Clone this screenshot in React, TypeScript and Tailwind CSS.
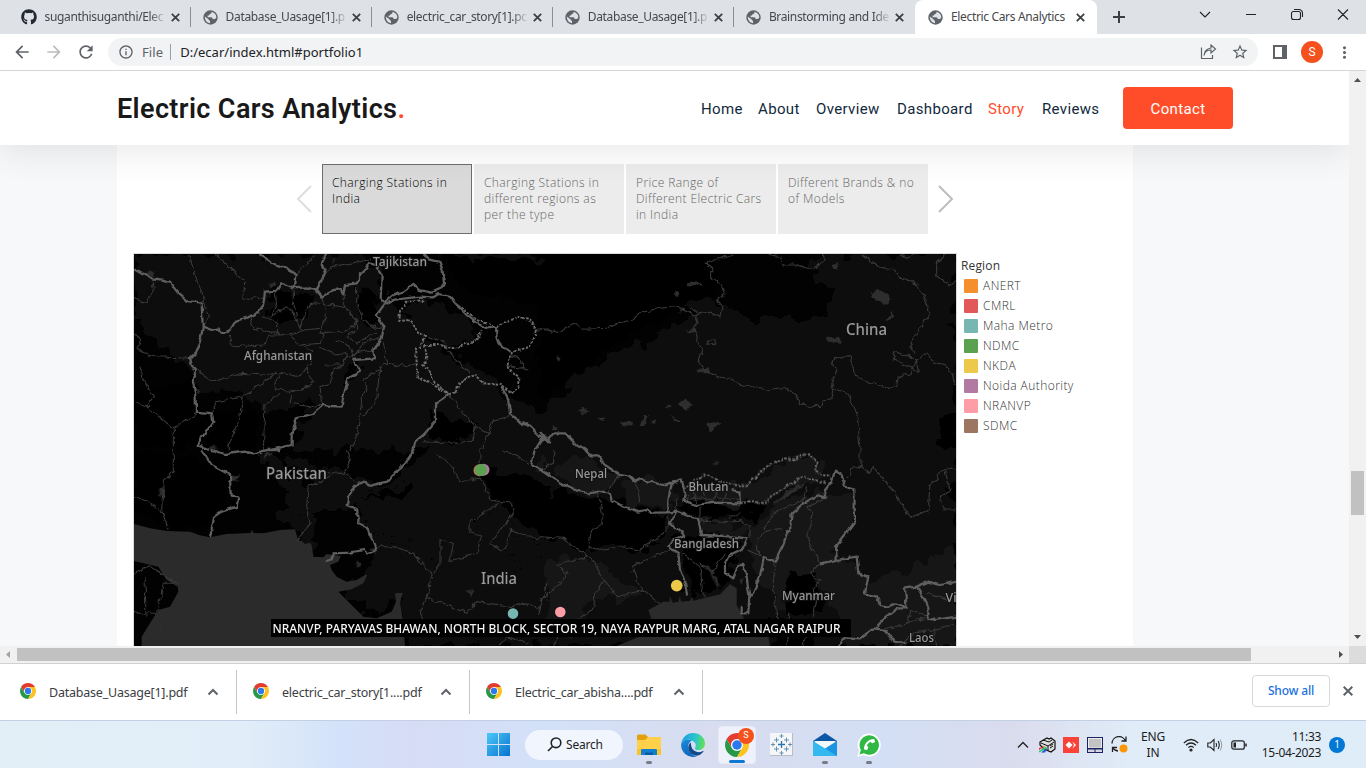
import React from "react";
import {
  MdArrowBack, MdArrowForward, MdRefresh, MdInfoOutline, MdStarBorder, MdMoreVert,
} from "react-icons/md";
import { FaGithub, FaPhoneAlt } from "react-icons/fa";

const tabs = [
  "suganthisuganthi/Elec",
  "Database_Uasage[1].p",
  "electric_car_story[1].pc",
  "Database_Uasage[1].p",
  "Brainstorming and Ide",
];

const ui = "font-['Noto_Sans','Open_Sans',sans-serif]";

function Globe() {
  return (
    <svg className="shrink-0" width="15" height="15" viewBox="0 0 15 15">
      <circle cx="7.500" cy="7.500" r="7.200" fill="#5f6368" />
      <path d="M8.600 1.800Q8.800 3.600 7.300 4 5.800 4.200 6 5.600H4.600V7.200H8.400Q9.600 7.500 9.600 9H11.500Q13 9 13.300 7.600 13.400 3.300 8.600 1.800z" fill="#dee1e6" />
      <path d="M1.700 6.600L5.500 9.200Q5.600 10.600 7 10.700V13.200Q2 12.600 1.700 6.600z" fill="#dee1e6" />
    </svg>
  );
}

function Cross({ className }: { className: string }) {
  return (
    <svg className={`shrink-0 ${className}`} width="9" height="9" fill="none" stroke="#3c4043" strokeWidth="1.8"><path d="M.8.800l7.400 7.400m0-7.400L.8 8.200" /></svg>
  );
}

function Tabs() {
  return (
    <div className="flex h-[34px] shrink-0 bg-[#dee1e6] pl-[9.500px] text-[#45494d]">
      {tabs.map((t, i) => (
        <div key={i} className="relative flex w-[181.100px] shrink-0 items-center pl-[12px]">
          <span className="flex w-[23px] shrink-0">
            {i === 0 ? <FaGithub size={16} className="-ml-[1px] text-[#24292f]" /> : <Globe />}
          </span>
          <span className="w-[122px] overflow-hidden whitespace-nowrap text-[12px] tracking-[-0.34px] [mask-image:linear-gradient(to_right,#000_86%,transparent)]">{t}</span>
          <Cross className="ml-[4px]" />
          {i < 4 && <span className="ml-auto h-[20px] w-px bg-[#8a8d91]" />}
        </div>
      ))}
      <div className="relative flex w-[182px] shrink-0 items-center rounded-t-[8px] bg-white pl-[13px]">
        <Globe />
        <span className="ml-[8px] w-[118px] whitespace-nowrap text-[12px] tracking-[-0.34px]">Electric Cars Analytics</span>
        <Cross className="ml-[7px]" />
      </div>
      <div className="flex w-[44px] items-center justify-center">
        <svg width="12" height="12" stroke="#3c4043" strokeWidth="2"><path d="M6 0v12M0 6h12" /></svg>
      </div>
      <svg className="ml-[53px] mt-[6px]" width="160" height="18" fill="none" stroke="#222" strokeWidth="1.100">
        <path d="M6 6l5 5 5-5M52 8.500h10M99.500 5.500h5q2 0 2 2v4q0 2-2 2h-5q-2 0-2-2v-4q0-2 2-2zM100 3.500h4.500q4 0 4 4v3.500M144 3.500l10 10m0-10l-10 10" />
      </svg>
    </div>
  );
}

function Toolbar() {
  return (
    <div className="flex h-[37px] shrink-0 items-center border-b border-[#d5d6d8] bg-white text-[#5f6368]">
      <MdArrowBack size={20} className="ml-[12px]" />
      <MdArrowForward size={20} className="ml-[12px] text-[#babcbe]" />
      <MdRefresh size={20} className="ml-[12px]" />
      <div className="ml-[12px] flex h-[28px] w-[1150px] items-center rounded-full bg-[#f1f3f4] pl-[10px] pr-[9px] text-[13px]">
        <MdInfoOutline size={16} />
        <span className="ml-[8px] pt-px tracking-[0.1px]">File</span>
        <span className="ml-[7px] h-[16px] w-px bg-[#9aa0a6]" />
        <span className="ml-[9px] pt-px tracking-[0.01px] text-[#202124]">D:/ecar/index.html#portfolio1</span>
        <svg className="ml-auto" width="17" height="16" fill="none" stroke="#5f6368" strokeWidth="1.200">
          <path d="M1.500 3.500v11h11V11M4 11.500q1-5.500 7-5.500V9l4.500-4L11 1v3Q4.500 5 4 11.500z" />
        </svg>
        <MdStarBorder size={18} className="ml-[14px]" />
      </div>
      <svg className="ml-[15px]" width="14" height="14"><path d="M1 1h12v12H1z" fill="none" stroke="#5f6368" strokeWidth="2" /><path d="M9 0h5v14H9z" fill="#5f6368" /></svg>
      <span className="ml-[14px] flex size-[22px] items-center justify-center rounded-full bg-[#f4511e] font-['Roboto',sans-serif] text-[12px] text-white">S</span>
      <MdMoreVert size={19} className="ml-[12px]" />
    </div>
  );
}

function Header() {
  const nav = ["Home", "About", "Overview", "Dashboard", "Story", "Reviews"];
  const widths = ["w-[41px]", "w-[42px]", "w-[65px]", "w-[75px]", "w-[38px]", "w-[57px]"];
  return (
    <div className="relative z-10 flex h-[74px] shrink-0 items-center bg-white pl-[117px] font-['Roboto',sans-serif] shadow-[0_10px_30px_rgba(70,70,70,0.1)]">
      <div className="w-[584px] pt-[2px] text-[27px] font-semibold tracking-[0.380px] text-[#191919]">Electric Cars Analytics<span className="text-[#ff4d29]">.</span></div>
      <div className="flex gap-[16px] pt-[2px] text-[15px] tracking-[0.350px]">
        {nav.map((n, i) => (
          <span key={n} className={`${widths[i]} whitespace-nowrap ${n === "Story" ? "text-[#ff4d29]" : "text-[#12293c]"}`}>{n}</span>
        ))}
      </div>
      <div className="ml-[24px] flex h-[42px] w-[110px] items-center justify-center rounded-[4px] bg-[#ff4d29] pt-[2px] text-[15px] tracking-[0.350px] text-white">Contact</div>
    </div>
  );
}

const points = [
  ["Charging Stations in", "India"],
  ["Charging Stations in", "different regions as", "per the type"],
  ["Price Range of", "Different Electric Cars", "in India"],
  ["Different Brands & no", "of Models"],
];

const legend = [
  ["ANERT", "bg-[#f58e2c]"], ["CMRL", "bg-[#e1575a]"], ["Maha Metro", "bg-[#77b7b2]"], ["NDMC", "bg-[#5aa150]"],
  ["NKDA", "bg-[#edc949]"], ["Noida Authority", "bg-[#b07aa2]"], ["NRANVP", "bg-[#ff9da7]"], ["SDMC", "bg-[#9c7660]"],
];

const labels: [string, number, number, number, number][] = [
  ["Tajikistan", 373, 266, 54, 12], ["Afghanistan", 244, 360, 68, 12], ["Pakistan", 266, 478.500, 61, 16],
  ["India", 481, 583.500, 36, 16], ["Nepal", 575, 478, 32, 12], ["Bhutan", 688.500, 491, 40, 12],
  ["Bangladesh", 674, 548, 65, 12], ["Myanmar", 782, 600, 53, 12], ["Laos", 909, 642, 25, 12],
  ["Vi", 945.500, 602, 11, 12], ["China", 846, 335, 41, 16],
];

const pos = ["translate(130 250) scale(.33333)", "translate(130 450) scale(.33333)", "translate(540 250) scale(.33333)", "translate(540 450) scale(.33333)"];

const terrain = [
  "M12 12H690L760 60 750 150 800 170 880 260 880 300 800 340 650 340 640 470 560 460 430 480 330 430 200 420 190 360 100 300 12 200zM750 200L880 200 900 280 1040 370 1260 520V600H500V520L660 400zM870 10L1000 20 1100 60 1260 90V12z",
  "M380 0L640 60 760 110 900 0H1260V588H830L810 430 740 500 630 420 700 370 740 290 680 180 550 190 560 320 510 250 440 220 470 130z",
  "M830 12H1248V600H0V500L100 380 200 320 330 270 460 190 400 160 500 145 640 215 800 205 900 180 940 140 820 90z",
  "M0 0H1248V588H0z",
];
const terrainFill = ["#0a0a0a", "#070707", "#0a0a0a", "#090909"];
const raised = [
  "M90 70L200 30 330 90 400 130 390 180 320 210 220 240 120 200 60 230zM225 260L300 250 370 220 440 130 550 150 680 110 740 200 710 280 630 370 510 350 440 440 300 380 220 370zM820 180L900 150 980 190 1040 230 1040 270 960 295 880 250zM890 290L990 330 1110 410 1150 510 1250 580 1200 600 1060 560 1000 460 900 370zM560 520L690 460 740 360 800 340 730 470 680 600H600z",
  "M480 100L540 90 530 210 490 190zM700 140L860 80 930 160 850 280 730 240zM1040 200L1150 170 1120 250 1250 300 1180 330 1060 290zM1100 400L1260 300V588H1020L980 500zM800 290L960 350 900 440 850 480z",
  "M1240 400L1130 440 1110 550 1000 600H1140L1180 520 1248 460zM870 70L1010 55 1080 180 1150 250 1070 280 920 230 870 210zM660 550L740 530 860 570 770 600z",
  "M0 0L40 40 0 70zM30 60L120 10 230 80 200 130 100 110zM240 80L410 110 385 185 250 160zM430 120L590 100 600 160 440 160zM600 110L810 10 870 80 720 120 680 155 600 150zM490 210L640 230 610 260 490 250zM630 240L720 150 850 120 940 140 940 230 880 310 1000 400 1248 290V588H920L830 370 740 480 640 370zM20 330L180 330 300 440 150 450 110 560 20 500z",
];
const raisedFill = ["#101010", "#0b0b0b", "#0c0c0c", "#141414"];
const shade = [
  "M420 125L550 130 540 200 420 210zM680 110L750 130 740 220 700 230zM940 20L1260 30V170L1000 120zM900 480L1040 510 1000 580 900 570zM10 440L190 380 220 590H12zM250 480L380 460 380 600H240z",
  "M12 0L250 30 300 120 220 240 60 220 12 150zM710 140L800 120 850 90 830 150zM440 20L560 90 540 110 470 60zM1050 60L1250 100V260L1150 210z",
  "M1248 480L1200 510 1180 590 1248 600zM0 12L500 12 550 130 400 180 200 300 0 450z",
  "M400 155L670 165 650 210 590 190 480 220zM390 245L600 270 560 390 450 440 430 340zM740 380L830 370 850 480 740 500zM0 130L180 140 380 200 340 300 140 290 0 250zM690 500L830 530 820 588H700zM1220 120L1248 120V190z",
];
const seas: [number, string][] = [
  [1, "M12 222L60 235 110 243 180 245 210 256 240 262 290 252 362 249 365 240 372 249 400 250 450 240 495 238 505 272 515 272 525 282 540 278 545 285 550 320 580 322 590 312 632 318 625 335 600 345 605 360 620 380 650 395 680 390 705 375 712 375 700 400 665 418 625 425 700 500 740 505 785 485 798 455 795 430 818 428 810 460 820 520 825 588H35V560L60 520 85 480 120 470 145 425 143 410 110 390 85 350 12 333z"],
  [3, "M325 480L370 455 388 455 390 438 398 458 415 455 418 438 424 455 450 452 455 440 460 452 490 445 540 433 570 402 590 415 590 465 610 500V545L685 560 690 588H230L310 555 335 510z"],
];
const lakes: [number, string][] = [
  [2, "M440 98L465 94 488 106 445 106zM400 132L412 122 418 132 405 140zM875 45L890 42 897 53 880 57zM992 138L1005 122 1030 122 1052 148 1048 165 1025 160zM1035 213L1055 186 1060 200zM858 268L880 264 900 260 902 278 865 275zM436 242L460 236 465 250zM113 480L130 474 147 488 125 488zM172 505L195 502 188 514zM246 512L276 514 274 530 250 525zM302 528L312 495 324 495 310 528zM330 517L348 508 345 522zM374 472L395 465 390 475zM413 463L435 445 458 465 440 480zM388 497L415 510 414 520zM502 520L545 516 510 545zM465 360L510 352 515 370 485 370zM38 528L55 534 40 540zM448 170L470 180 470 192zM48 322L62 325 56 335z"],
  [0, "M415 102L432 98 438 112 420 110zM608 28L620 34 610 40zM50 65L75 65 75 82 55 82zM235 585L270 592 240 598zM198 415L210 425 200 435z"],
  [1, "M300 75L332 72 320 85 330 94 305 92zM88 118L105 116 100 138 90 135zM1010 425L1035 420 1022 440zM400 10L430 4 405 28zM85 530L100 515 98 528 85 542zM720 298L740 292 735 310zM675 333L695 348 680 352z"],
  [3, "M695 165L740 125 800 95 790 105 735 145zM510 25L540 38 515 45 528 35zM550 195L575 200 605 185 600 192 575 205zM495 350L525 365 520 375 540 405 535 410 520 388zM598 390L610 385 605 410zM485 215L515 196 495 215z"],
];
const major: [number, string][] = [
  [0, "M12 58L38 73 70 88 95 92 120 98 145 130 175 157 215 160 218 230 212 270 195 310 180 325 188 355 200 362 188 390 197 440 198 485 245 490 250 515 225 550 200 585 240 600M218 230L245 240 265 235 280 250 300 240 318 212 355 202 385 185 400 165 405 125 440 122 452 100 490 115 530 112 560 122 575 140 610 120 630 118 640 130 645 105 680 100 690 85 690 70 720 40 745 48M388 12L430 40 470 55 500 72 495 112M590 12L575 40 585 70 565 110 560 122M880 12L895 28 928 35 938 60 942 100 935 115 905 128 870 120 850 105 820 125 790 135 765 155 752 150 755 75 740 55 745 48M765 160L790 150 870 140 910 142 925 132 960 140 985 170 1010 195 1040 220 1070 235 1098 232L1100 265 1115 290 1145 305M765 160L740 195 762 230 755 265 730 300 735 325 670 330 690 365 655 385 640 440 635 470 605 468 580 465 550 490 500 505 485 550 485 585 420 600M955 435L915 465 915 515 880 555 855 575 850 600M1115 410L1135 450 1140 490 1170 515 1200 530 1225 555 1260 575M1240 560L1215 600"],
  [1, "M850 0L830 35 800 60 775 95 745 100 715 110 705 92 690 97 655 140 650 165 685 180 685 220 710 232 735 290 740 300 715 313 700 300 660 308 612 310 605 328 583 333M215 0L245 45 300 75 302 140 325 142 320 170 275 185 252 200 240 262M245 0L285 12 345 5 370 10 410 0 450 0M1215 0L1203 45 1230 58 1260 72"],
  [2, "M0 545L22 573 40 550 75 550 110 585 140 600M0 575L20 565"],
  [3, "M135 0L155 20 180 18 195 45 240 75 270 80 285 95 300 88 340 98 370 105 395 98M0 55L45 88 100 118 145 130 175 125 210 132 215 150 250 170 290 185 320 180 340 188 385 187 385 150 395 100 425 88 435 130 430 150 470 165 520 158 600 160 598 125 575 120M860 145L855 120 875 95 885 62 905 75 915 110 943 118 945 215 915 255 888 290 890 330 950 320 955 370 985 380 975 430 1010 440 1020 465 1045 470 1070 460 1100 475 1095 415 1130 410 1165 395 1200 405 1248 395M860 145L830 138 790 160 755 190 750 240 740 250 730 285 705 335 672 322 660 380 635 435 628 435 625 490 605 490 605 470M385 187L410 185 450 200 475 205 483 255 560 258 620 265 605 300 565 320 555 340 555 370 580 385 595 345 610 345 620 380 628 440M410 185L390 220 410 235 435 255 395 270 385 290 415 310 420 360 435 400 442 435M895 588L915 562 960 565 1000 535 1035 540 1060 575 1100 580M1130 410L1150 440 1165 470 1165 505 1185 510 1248 500M1100 475L1075 475 1040 500 1010 530M890 330L840 340"],
];
const dotted: [number, string][] = [
  [0, "M880 150L830 155 810 185 808 210 840 215 855 235 885 260 870 290 858 295 862 380 900 400 955 435M885 285L930 285 975 295 1040 270 1055 240M885 285L890 320 880 345 900 370 915 400 955 430M955 435L975 430 990 395 1035 375 1060 400 1115 405M1098 232L1140 210 1170 200 1205 215 1218 240 1200 290 1150 305 1130 350 1165 380 1165 410 1145 430 1115 410M985 165L1040 210 1098 230"],
  [3, "M435 120L460 90 500 75 520 85 580 105 620 105 650 80 670 55 730 25 760 28 805 10 830 35 825 65 850 75 870 82M600 158L680 155 720 122 790 80 860 100"],
];
const minor: [number, string][] = [
  [0, "M178 12L190 60 205 100 220 140 235 205 220 230M258 12L345 95 338 145 400 145M12 145L50 160 70 120 65 80M435 122L440 160 425 200 470 170 490 190 510 235 520 200 540 160 640 170 680 210 660 240 570 250 590 200 575 140M490 115L490 160 500 200M440 210L440 250 370 235 360 200 390 190M435 250L480 255 520 240 570 235M400 200L440 215M295 255L310 290 400 285 420 255 480 255 510 285 570 280 580 250M510 285L545 300 540 340 510 380 450 370 430 400 440 420 500 425 550 400 530 350M640 130L640 170 680 210 680 240 650 260 680 280 740 250M680 100L680 160 700 210 740 235 760 230M590 70L600 50 720 30M550 20L500 75M570 290L620 315 650 310 640 345 610 360 600 400 570 410 575 465 540 470 480 460 485 430M620 270L660 290 670 320 700 280 750 260M640 330L690 305 730 300M640 345L580 345M200 360L250 395 335 370 400 375 440 370M245 490L260 455 340 440 430 375M340 440L325 520 295 580 295 600M400 600L405 460 450 430M12 255L35 270 20 300 80 320 185 325M30 350L40 390 70 440 50 470 130 535 130 600M130 535L200 490M12 455L60 470M760 280L770 340 700 390 710 410 695 450 690 500 680 560 660 600M770 340L830 350 858 340M960 435L990 480 1035 530 1075 550 1090 510 1140 500M1075 550L1050 600M1035 530L1030 570 980 580 880 575M885 260L940 275 970 320 1020 370M1220 240H1260M1145 320L1175 330 1180 360M1130 345L1195 360M750 350L740 450 700 500"],
  [1, "M130 0L130 65 100 90 95 180 115 240M12 135L60 160 100 190M650 0L660 40 640 70 590 68M640 70L680 100M600 80L535 110 530 170 540 220 505 270M915 10L960 40 990 95 1020 90 1050 85 1065 110 1080 150 1145 160 1150 190 1110 240 1080 280 1110 300 1130 290 1140 240 1190 260 1260 265M1105 160L1020 215 1020 245 1055 255 1040 310 960 335 970 280 930 270 930 340 905 380 890 445 940 460 1010 490 1040 455 1150 470 1180 460 1230 470M740 290L790 290 850 310 905 375M890 440L870 480 880 520M1050 0V40M1250 400L1225 500M1110 588L1130 560 1190 580M12 370L60 350 140 400 100 400 80 490 12 490M45 380L48 500M1120 0L1200 40"],
  [2, "M0 240L50 248 100 220 130 238 200 235 250 215 280 210 295 190 360 175 410 170 460 195 490 185 545 198 545 170 530 150 555 130 545 105 515 85 515 50 497 40 580 12M465 195L475 220 460 235 485 300 475 330 495 360 530 380 570 385 600 402 680 420 735 412 775 440 775 460 800 468 845 470 850 452 872 450 880 415 875 400 890 360 875 340 890 320 930 322 945 375 985 400 1005 400 1045 415 1070 410 1075 380 1110 370 1130 330 1100 315 1060 305 1060 330 1105 350 1135 370 1130 330 1165 310 1180 340 1230 350 1245 405M880 415L920 430 950 490 955 530 960 600M685 12L720 20 730 45 770 45 820 60 855 30 850 12M965 12L1015 50 1060 60 1080 85 1115 90 1150 130 1170 190 1135 240 1110 280 1125 310M1080 12L1100 25 1120 12M1220 12L1190 40 1190 75 1230 107 1248 95M505 270L525 270 525 284 505 282z"],
  [3, "M175 130L185 180 190 220 155 240 145 290 160 300 250 290 300 300 380 240 385 200M0 260L70 265 115 300 150 320 190 390 160 440 165 470 130 500M150 320L80 335 50 345 80 370 50 410 0 450M385 300L275 350 290 390 310 420 360 460M190 390L230 440 310 420M290 100L300 160M240 75L200 125M45 0L40 40 0 60M430 310L480 350 490 445M480 340L520 360 555 310M410 185V145M480 210L560 215 600 210 630 230 630 260M480 170L480 250M450 130L440 160M460 125L470 160M490 125L500 155M530 125L520 155M560 130L550 155M440 145H600M800 170L860 145M800 170L820 190 800 260 830 320 840 340 810 370 840 390 820 420 830 450 820 500M705 335L700 400 710 500 750 530 740 588M670 320L650 300 650 270 680 240 730 235M670 240L700 190 790 150 800 110M620 300L670 320M960 0L960 50 940 50 930 75 920 80M960 50L985 70 1000 50 1040 100 1060 120 1110 205 1165 180 1170 100 1190 90 1200 60 1215 55 1248 60M1215 60L1230 120 1200 150 1210 180 1248 180M1035 540L1100 520 1110 480 1165 500M1100 520L1130 510 1165 505M1080 588L1120 550 1180 540 1248 520M1190 588L1180 540M1160 430L1220 450M750 490L745 520 800 540 790 588M130 500L80 520 40 588"],
];

function Layer({ data, ...p }: { data: [number, string][] } & React.SVGProps<SVGGElement>) {
  return <g {...p}>{data.map(([i, d]) => <path key={i} transform={pos[i]} d={d} />)}</g>;
}

function Rough({ id, freq, scale, seed }: { id: string; freq: number; scale: number; seed: number }) {
  return (
    <filter id={id} filterUnits="userSpaceOnUse" x="134" y="254" width="822" height="392">
      <feTurbulence type="fractalNoise" baseFrequency={freq} numOctaves="2" seed={seed} />
      <feDisplacementMap in="SourceGraphic" scale={scale} xChannelSelector="R" yChannelSelector="G" />
    </filter>
  );
}

function MapView() {
  return (
    <div className="relative h-[393px] w-[824px] border border-b-0 border-[#d8dcda] bg-black">
      <svg className="block" width="822" height="392" viewBox="134 254 822 392">
        <defs>
          <Rough id="rough" freq={0.12} scale={5} seed={4} />
          <Rough id="rough-minor" freq={0.15} scale={6} seed={7} />
          <Rough id="rough-land" freq={0.07} scale={24} seed={9} />
        </defs>
        <rect x="134" y="254" width="822" height="392" fill="#020202" />
        <g filter="url(#rough-land)">
          {terrain.map((d, i) => <path key={i} transform={pos[i]} d={d} fill={terrainFill[i]} />)}
          {raised.map((d, i) => <path key={i} transform={pos[i]} d={d} fill={raisedFill[i]} />)}
          <g fill="#050505">{shade.map((d, i) => <path key={i} transform={pos[i]} d={d} />)}</g>
        </g>
        <Layer data={seas} fill="#2b2b2b" />
        <g filter="url(#rough-minor)">
          <Layer data={lakes} fill="#2f2f2f" />
          <Layer data={minor} fill="none" stroke="#3b3b3b" strokeWidth="3.200" />
        </g>
        <g filter="url(#rough)">
          <Layer data={dotted} fill="none" stroke="#6c6c6c" strokeWidth="6" strokeDasharray="8 4" />
          <Layer data={major} fill="none" stroke="#5e5e5e" strokeWidth="6.800" strokeLinejoin="round" />
        </g>
        <g fill="#999" stroke="#111" strokeWidth="2" paintOrder="stroke" fontWeight="500" fontFamily="'Noto Sans', sans-serif">
          {labels.map(([t, x, y, w, s]) => (
            <text key={t} x={x} y={y} fontSize={s} textLength={w} lengthAdjust="spacingAndGlyphs">{t}</text>
          ))}
        </g>
        <circle cx="479.500" cy="470.300" r="6" fill="#b8765a" />
        <circle cx="483.500" cy="469.800" r="6" fill="#b07aa2" />
        <circle cx="481" cy="470" r="6" fill="#5aa150" />
        <circle cx="676.700" cy="585.600" r="5.800" fill="#edc949" />
        <circle cx="560.300" cy="612" r="5.300" fill="#ff9da7" />
        <circle cx="513" cy="613.600" r="5.300" fill="#77b7b2" />
        <rect x="271" y="619" width="580" height="18" fill="#000" />
        <text x="272.500" y="633" fontSize="12" fontWeight="500" fill="#f4f4f4" fontFamily="'Noto Sans', sans-serif" textLength="568" lengthAdjust="spacingAndGlyphs">NRANVP, PARYAVAS BHAWAN, NORTH BLOCK, SECTOR 19, NAYA RAYPUR MARG, ATAL NAGAR RAIPUR</text>
      </svg>
    </div>
  );
}

function Story() {
  return (
    <div className="ml-[117px] h-[501px] w-[1016px] bg-white pl-[16px] font-['Open_Sans',sans-serif]">
      <div className="flex items-center pl-[163px] pt-[19px]">
        <svg width="17" height="30" fill="none" stroke="#dedede" strokeWidth="2"><path d="M15 2L2 15l13 13" /></svg>
        <div className="ml-[9px] flex gap-[2px]">
          {points.map((p, i) => (
            <div key={i} className={`h-[70px] w-[150px] whitespace-nowrap text-[12px] font-light leading-[16px] tracking-[0.400px] ${i === 0 ? "border border-[#6e6e6e] bg-[#dadada] px-[9px] pt-[10px] text-black" : "bg-[#ececec] px-[10px] pt-[11px] text-[#666]"}`}>
              {p.map((l) => <div key={l}>{l}</div>)}
            </div>
          ))}
        </div>
        <svg className="ml-[9px]" width="17" height="30" fill="none" stroke="#bdbdbd" strokeWidth="2"><path d="M2 2l13 13L2 28" /></svg>
      </div>
      <div className="flex pt-[19px]">
        <MapView />
        <div className="pl-[4px] pt-[3px] text-[12px] font-light leading-[20px] tracking-[0.430px] text-[#333]">
          <div className="font-normal tracking-[0.150px]">Region</div>
          {legend.map(([n, c]) => (
            <div key={n} className="flex items-center gap-[5px] pl-[3px]">
              <span className={`size-[14px] rounded-[1px] ${c}`} />{n}
            </div>
          ))}
        </div>
      </div>
    </div>
  );
}

function Chrome({ size }: { size: number }) {
  return (
    <svg width={size} height={size} viewBox="0 0 48 48">
      <circle cx="24" cy="24" r="13" fill="#fff" />
      <path d="M24 12h20.780A24 24 0 0 0 3.220 12L13.610 30A12 12 0 0 1 24 12z" fill="#e33b2e" />
      <path d="M13.610 30L3.220 12A24 24 0 0 0 24 48l10.390-18a12 12 0 0 1-20.780 0z" fill="#279847" />
      <path d="M34.390 30L24 48a24 24 0 0 0 20.780-36H24a12 12 0 0 1 10.390 18z" fill="#fcc31e" />
      <circle cx="24" cy="24" r="9.500" fill="#2a79ee" />
    </svg>
  );
}

function Downloads() {
  const files = ["Database_Uasage[1].pdf", "electric_car_story[1....pdf", "Electric_car_abisha....pdf"];
  const w = ["w-[237px]", "w-[233px]", "w-[233px]"];
  const l = ["pl-[20px]", "pl-[16px]", "pl-[16px]"];
  return (
    <div className="flex h-[57px] shrink-0 items-center border-t border-[#d0d1d3] bg-white">
      {files.map((f, i) => (
        <div key={f} className={`flex h-[44px] items-center border-r border-[#c6c8ca] ${w[i]} ${l[i]}`}>
          <span className="-mt-[3px]"><Chrome size={16} /></span>
          <span className="ml-[13px] w-[154px] whitespace-nowrap pt-[2px] text-[12.500px] tracking-[-0.220px] text-[#3c4043]">{f}</span>
          <svg className="ml-[4px]" width="12" height="8" fill="none" stroke="#5f6368" strokeWidth="2"><path d="M1.500 6.500L6 2l4.500 4.500" /></svg>
        </div>
      ))}
      <div className="-mt-[3px] ml-[549px] flex h-[32px] w-[78px] items-center justify-center rounded-[4px] border border-[#d5d8dc] text-[12px] font-medium tracking-[-0.150px] text-[#1a6fe0]">Show all</div>
      <svg className="-mt-[3px] ml-[13px]" width="10" height="10" stroke="#5f6368" strokeWidth="2"><path d="M.7.700l8.600 8.600m0-8.600L.7 9.300" /></svg>
    </div>
  );
}

function Edge() {
  return (
    <svg width="24" height="24" viewBox="0 0 24 24">
      <defs>
        <linearGradient id="e1" x1="0" y1=".3" x2="1" y2=".4"><stop stopColor="#1a9fe0" /><stop offset=".6" stopColor="#2cc6cf" /><stop offset="1" stopColor="#62e24c" /></linearGradient>
        <linearGradient id="e2" x1="0" y1="0" x2=".3" y2="1"><stop stopColor="#1a8bd8" /><stop offset="1" stopColor="#0f66bd" /></linearGradient>
      </defs>
      <path d="M.3 11C1 4.500 6 0 12 0c7 0 12 5 12 10.500 0 4-3 6.500-6.500 6.500-3 0-4.300-1.200-3.300-2.600 1-1.400.8-4.400-1.700-6C8.500 5.500 2 6.500.3 11z" fill="url(#e1)" />
      <path d="M.1 12C.6 7.500 6.500 5.500 11 7.600 8 9 6.500 12 7.500 16c1 4 4.500 7 8.500 7.300A12 12 0 0 1 .1 12z" fill="url(#e2)" />
      <path d="M10 9.500c-3 2-3.500 6-1.500 9.300 2.500 4 8 5.200 11.500 2.200 1.500-1.200 2.500-2.500 2.700-3.200-3.500 2-7.500 1.700-10-.5C10.500 15.300 9.700 12.500 10 9.500z" fill="#114a8b" />
    </svg>
  );
}

function Dot() {
  return <span className="absolute bottom-[1px] h-[3px] w-[6px] rounded-full bg-[#767b85]" />;
}

function Taskbar() {
  const cell = "relative flex h-[40px] w-[44px] items-center justify-center";
  return (
    <div className="flex h-[48px] shrink-0 items-center border-t border-[#c3d0e3] bg-[linear-gradient(90deg,#e2eff7_0%,#e1edf8_18%,#d3e2fa_25%,#d6dcf5_30%,#d3e1f8_40%,#d8dcef_53%,#d3dff5_65%,#dadced_74%,#e0ecf8_83%,#dfedf8_100%)] text-[12px] text-[#1c1c1c]">
      <svg className="ml-[487px]" width="23" height="23">
        <defs><linearGradient id="win" x1="0" y1="0" x2="1" y2="1"><stop stopColor="#4cc9f9" /><stop offset="1" stopColor="#0672cf" /></linearGradient></defs>
        <path d="M0 0h11v11H0V0zM12 0h11v11H12zM0 12h11v11H0zM12 12h11v11H12z" fill="url(#win)" />
      </svg>
      <div className="ml-[15px] flex h-[30px] w-[98px] items-center rounded-full bg-[#f1f5fd] pl-[22px] text-[12px] tracking-[-0.200px]">
        <svg width="15" height="15" fill="none" stroke="#222" strokeWidth="1.600"><circle cx="9" cy="5.800" r="4.800" /><path d="M5.500 9.500L1 14" /></svg>
        <span className="ml-[4px]">Search</span>
      </div>
      <div className={`${cell} ml-[4px]`}>
        <svg width="24" height="22">
          <path d="M0 2q0-1.500 1.500-1.500h7L11 3H22.500q1.500 0 1.500 1.500V21H0z" fill="#e2a10c" /><path d="M0 6h8l3-3h12q1 0 1 1v17H0z" fill="#ffd04a" /><path d="M0 15h24v6H0z" fill="#f7b917" opacity=".6" />
          <path d="M4 21v-5q0-1 1.500-1h13q1.500 0 1.500 1v5z" fill="#107fd0" /><path d="M8 18.500h8V21H8z" fill="#0b5ba1" />
        </svg><Dot />
      </div>
      <div className={cell}><Edge /></div>
      <div className={cell}>
        <div className="relative flex h-[38px] w-[38px] items-center justify-center rounded-[4px] border border-[#e8eaf5] bg-[#eef1fb]">
          <Chrome size={24} />
          <span className="absolute right-[1px] top-[1px] flex size-[16px] items-center justify-center rounded-full bg-[#f4511e] font-['Roboto',sans-serif] text-[9px] text-white">S</span>
          <span className="absolute bottom-0 h-[3px] w-[16px] rounded-full bg-[#0f78d2]" />
        </div>
      </div>
      <div className={cell}>
        <svg width="23" height="23" fill="none"><path d="M0 0h23v23H0z" fill="#b9bcc4" /><path d="M0 0h22v22H0z" fill="#f4f6f8" />
          <path d="M8 11.500h7M11.500 8v7" stroke="#2b74b2" strokeWidth="1.300" />
          <path d="M4 7h5M6.500 4.500v5M14 7h5M16.500 4.500v5M4 16h5M6.500 13.500v5M14 16h5M16.500 13.500v5M9.500 3h4M11.500 1v4M9.500 20h4M11.500 18v4M1 11.500h4M3 9.500v4M18 11.500h4M20 9.500v4" stroke="#5589ae" strokeWidth=".9" />
        </svg>
      </div>
      <div className={cell}>
        <svg width="24" height="24"><path d="M0 8L12 0l12 8v5H0z" fill="#0c57a5" /><path d="M1.500 8h21v8h-21z" fill="#f5f8fa" /><path d="M24 8v15H0l12-7.500z" fill="#1b94e2" /><path d="M0 8l24 15H0z" fill="#34b8f0" /></svg><Dot />
      </div>
      <div className={cell}>
        <span className="relative flex size-[24px] items-center justify-center">
          <svg className="absolute inset-0" width="24" height="24"><path d="M.3 23.700L2 17.600A11.600 11.600 0 1 1 6.300 22z" fill="#fff" /><path d="M2.500 21.500L3.900 17A9.700 9.700 0 1 1 7 20.200z" fill="#2fb944" /></svg>
          <FaPhoneAlt size={11} className="relative rotate-90 text-white" />
        </span><Dot />
      </div>
      <svg className="ml-[126px]" width="12" height="8" fill="none" stroke="#222" strokeWidth="1.300"><path d="M1 6.500l5-5 5 5" /></svg>
      <svg className="ml-[10px]" width="17" height="16">
        <path d="M1 5l7-4 2 1 2-1 4 3v8l-4 3-7-3-4-4z" fill="#dcdcdc" stroke="#111" strokeWidth="1.200" /><path d="M2 6l7 3 6-4M9 9v5M4 3l6 2 3-2M11 9l3-2M11 11l3-2" stroke="#111" fill="none" />
        <path d="M7 8.500L0 13V11z" fill="#f02c22" /><path d="M7 9.500L0 14v1.500l8-4z" fill="#20c96b" /><path d="M8 11l-6 4.500h4z" fill="#2149e8" />
      </svg>
      <svg className="ml-[7px]" width="16" height="16"><path d="M0 0h16v16H0z" fill="#fa4238" /><path d="M6 4.500L9.500 8 6 11.500 2.500 8z" fill="#fff" /><path d="M9.500 4.500L13 8l-3.500 3.500L11 8z" fill="#fff" /></svg>
      <svg className="ml-[8px]" width="16" height="16"><path d="M0 0h16v16H0z" fill="#1c2365" /><path d="M1 1h14v10H1z" fill="#eee" /><path d="M2 2h12v8.500H2z" fill="#c3c3c3" /><path d="M1 12.500h6.500V15H1zM8.500 12.500H15V15H8.500z" fill="#d4d6e2" /></svg>
      <svg className="ml-[8px]" width="17" height="17" fill="none" stroke="#222" strokeWidth="1.300"><path d="M1 7.500A7 7 0 0 1 14.500 5M15 .500V5h-4.500M7 15Q3 14.500 1.500 11.500M1.500 16v-4.500H6" /><circle cx="12.500" cy="12.500" r="4" fill="#ff9800" stroke="none" /></svg>
      <div className="ml-[10px] w-[30px] text-center leading-[16px] tracking-[-0.200px]">ENG<br />IN</div>
      <svg className="ml-[15px]" width="16" height="14" fill="none" stroke="#222" strokeWidth="1.200"><path d="M.8 5Q8-2 15.200 5M3 7.300q5-4.600 10 0M5.300 9.600q2.700-2.400 5.400 0" /><circle cx="8" cy="12" r="1" fill="#222" /></svg>
      <svg className="ml-[8px]" width="16" height="14" fill="none" stroke="#222" strokeWidth="1.100"><path d="M.8 5v4h2.500L7 12.500v-11L3.300 5zM9 5q1.300 2 0 4M11 3q2.500 4 0 8" /><path d="M13 1.500q3.500 5.500 0 11" stroke="#9ba3ab" /></svg>
      <svg className="ml-[8px]" width="17" height="10" fill="none" stroke="#222" strokeWidth="1.200"><rect x=".8" y=".8" width="12.500" height="8.400" rx="2" /><path d="M2.500 2.500H5v5H2.500z" fill="#222" stroke="none" /><path d="M15 3.500v3" strokeWidth="1.500" /></svg>
      <div className="ml-[10px] w-[63px] whitespace-nowrap text-right leading-[16px] tracking-[-0.350px]">11:33<br />15-04-2023</div>
      <span className="ml-[8px] flex size-[16px] items-center justify-center rounded-full bg-[#0078d4] text-[10px] text-white">1</span>
    </div>
  );
}

export default function App() {
  return (
    <div className={`flex h-[768px] w-[1366px] flex-col overflow-hidden bg-white ${ui}`}>
      <Tabs />
      <Toolbar />
      <div className="flex h-[575px] shrink-0">
        <div className="w-[1349px] overflow-hidden bg-[#f7f8fa]">
          <Header />
          <Story />
        </div>
        <div className="flex w-[17px] flex-col items-center bg-[#f1f1f1]">
          <svg width="17" height="17"><path d="M5 11l3.500-4L12 11z" fill="#505050" /></svg>
          <div className="mt-[383px] h-[44px] w-[13px] bg-[#c1c1c1]" />
          <svg className="mt-auto" width="17" height="17"><path d="M5 6l3.500 4L12 6z" fill="#505050" /></svg>
        </div>
      </div>
      <div className="flex h-[17px] shrink-0 items-center bg-[#f1f1f1]">
        <svg width="17" height="17"><path d="M10 5L6 8.500 10 12z" fill="#a3a3a3" /></svg>
        <div className="h-[13px] w-[1234px] bg-[#c1c1c1]" />
        <svg className="ml-[81px]" width="17" height="17"><path d="M7 5l4 3.500L7 12z" fill="#505050" /></svg>
        <div className="h-full w-[17px] bg-[#dcdcdc]" />
      </div>
      <Downloads />
      <Taskbar />
    </div>
  );
}
